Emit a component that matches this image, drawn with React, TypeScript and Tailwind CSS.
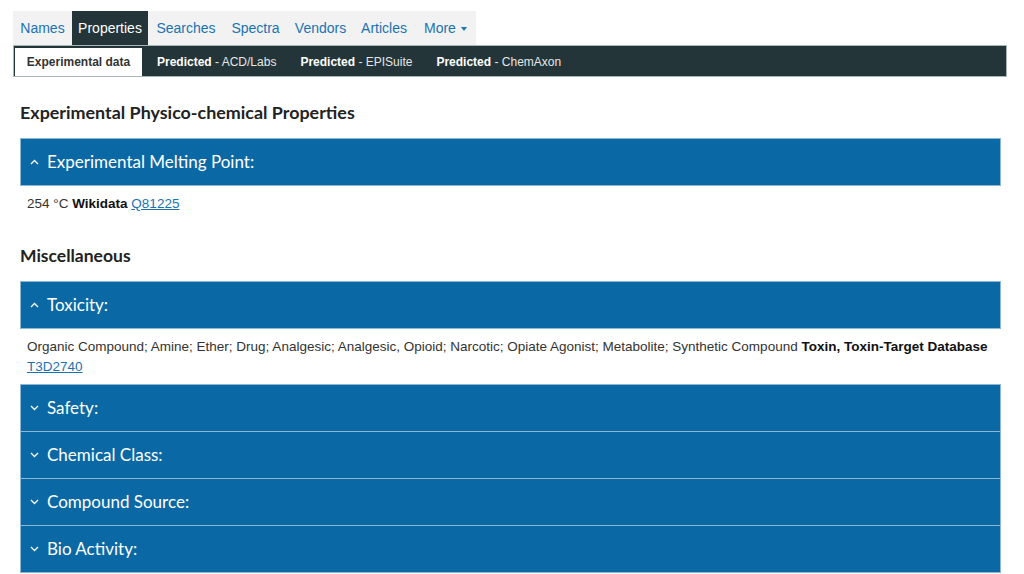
import React from "react";

const tabs: [string, number][] = [
  ["Names", 59],
  ["Properties", 76],
  ["Searches", 76],
  ["Spectra", 63],
  ["Vendors", 67],
  ["Articles", 60],
];

function Chevron({ up }: { up: boolean }) {
  return (
    <svg width="9" height="6" viewBox="0 0 9 6" className="shrink-0">
      {up ? (
        <path d="M1 5 L4.5 1.5 L8 5" fill="none" stroke="white" strokeWidth="1.3" />
      ) : (
        <path d="M1 1 L4.5 4.5 L8 1" fill="none" stroke="white" strokeWidth="1.3" />
      )}
    </svg>
  );
}

function Header({ title, up, top }: { title: string; up: boolean; top?: boolean }) {
  return (
    <div
      className={`flex items-center bg-[#0a69a5] border border-[#8cb8d6] ${top ? "h-[48px]" : "h-[47px] border-t-0"} pl-[9px] gap-[8px] text-white text-[17px]`}
      style={{ fontFamily: "Lato, 'Open Sans', sans-serif" }}
    >
      <Chevron up={up} />
      <span>{title}</span>
    </div>
  );
}

export default function App() {
  return (
    <div className="w-[1024px] h-[574px] bg-white overflow-hidden" style={{ fontFamily: "'Liberation Sans', Arial, sans-serif" }}>
      <div className="pt-[11px] pl-[13px] pr-[17px]">
        <div className="flex h-[34px] text-[14px]">
          {tabs.map(([t, w]) => (
            <div
              key={t}
              style={{ width: w }}
              className={`flex items-center justify-center ${t === "Properties" ? "bg-[#233539] text-white" : "bg-[#f2f2f2] text-[#1b72b2]"}`}
            >
              {t}
            </div>
          ))}
          <div className="flex items-center w-[62px] pl-[10px] bg-[#f2f2f2] text-[#1b72b2] gap-[5px]">
            More
            <span className="inline-block w-0 h-0 border-l-[3.5px] border-r-[3.5px] border-t-[4px] border-l-transparent border-r-transparent border-t-[#1b72b2] mt-[2px]" />
          </div>
        </div>
        <div className="flex items-end h-[32px] bg-[#233539] border border-[#aab4b6] text-[12px] font-bold text-white">
          <div className="flex items-center h-[28px] w-[127px] justify-center bg-white text-[#333] ml-[1px]">Experimental data</div>
          <div className="flex items-center h-[28px] pl-[15px] pr-[12px]">
            Predicted<span className="font-normal text-[#e6e6e6]">&nbsp;- ACD/Labs</span>
          </div>
          <div className="flex items-center h-[28px] px-[12px]">
            Predicted<span className="font-normal text-[#e6e6e6]">&nbsp;- EPISuite</span>
          </div>
          <div className="flex items-center h-[28px] px-[12px]">
            Predicted<span className="font-normal text-[#e6e6e6]">&nbsp;- ChemAxon</span>
          </div>
        </div>
      </div>

      <div className="pl-[20px] pr-[23px]">
        <h2
          className="mt-[24px] mb-[15px] text-[17.9px] font-bold text-[#222] leading-[22px]"
          style={{ fontFamily: "Lato, 'Open Sans', sans-serif" }}
        >
          Experimental Physico-chemical Properties
        </h2>
        <Header title="Experimental Melting Point:" up top />
        <div className="px-[7px] pt-[8px] text-[13.5px] text-[#333] leading-[20px] h-[45px]">
          254 °C <b className="text-[#111]">Wikidata</b>{" "}
          <a className="text-[#1b72b2] underline">Q81225</a>
        </div>
        <h2
          className="mt-[14px] mb-[14px] text-[17.5px] font-bold text-[#222] leading-[22px]"
          style={{ fontFamily: "Lato, 'Open Sans', sans-serif" }}
        >
          Miscellaneous
        </h2>
        <Header title="Toxicity:" up top />
        <div className="px-[7px] pt-[8px] pb-[7px] text-[13.5px] text-[#333] leading-[20px]">
          Organic Compound; Amine; Ether; Drug; Analgesic; Analgesic, Opioid; Narcotic; Opiate Agonist; Metabolite; Synthetic Compound{" "}
          <b className="text-[#111]">Toxin, Toxin-Target Database</b>{" "}
          <a className="text-[#1b72b2] underline">T3D2740</a>
        </div>
        <Header title="Safety:" up={false} top />
        <Header title="Chemical Class:" up={false} />
        <Header title="Compound Source:" up={false} />
        <Header title="Bio Activity:" up={false} />
      </div>
    </div>
  );
}
